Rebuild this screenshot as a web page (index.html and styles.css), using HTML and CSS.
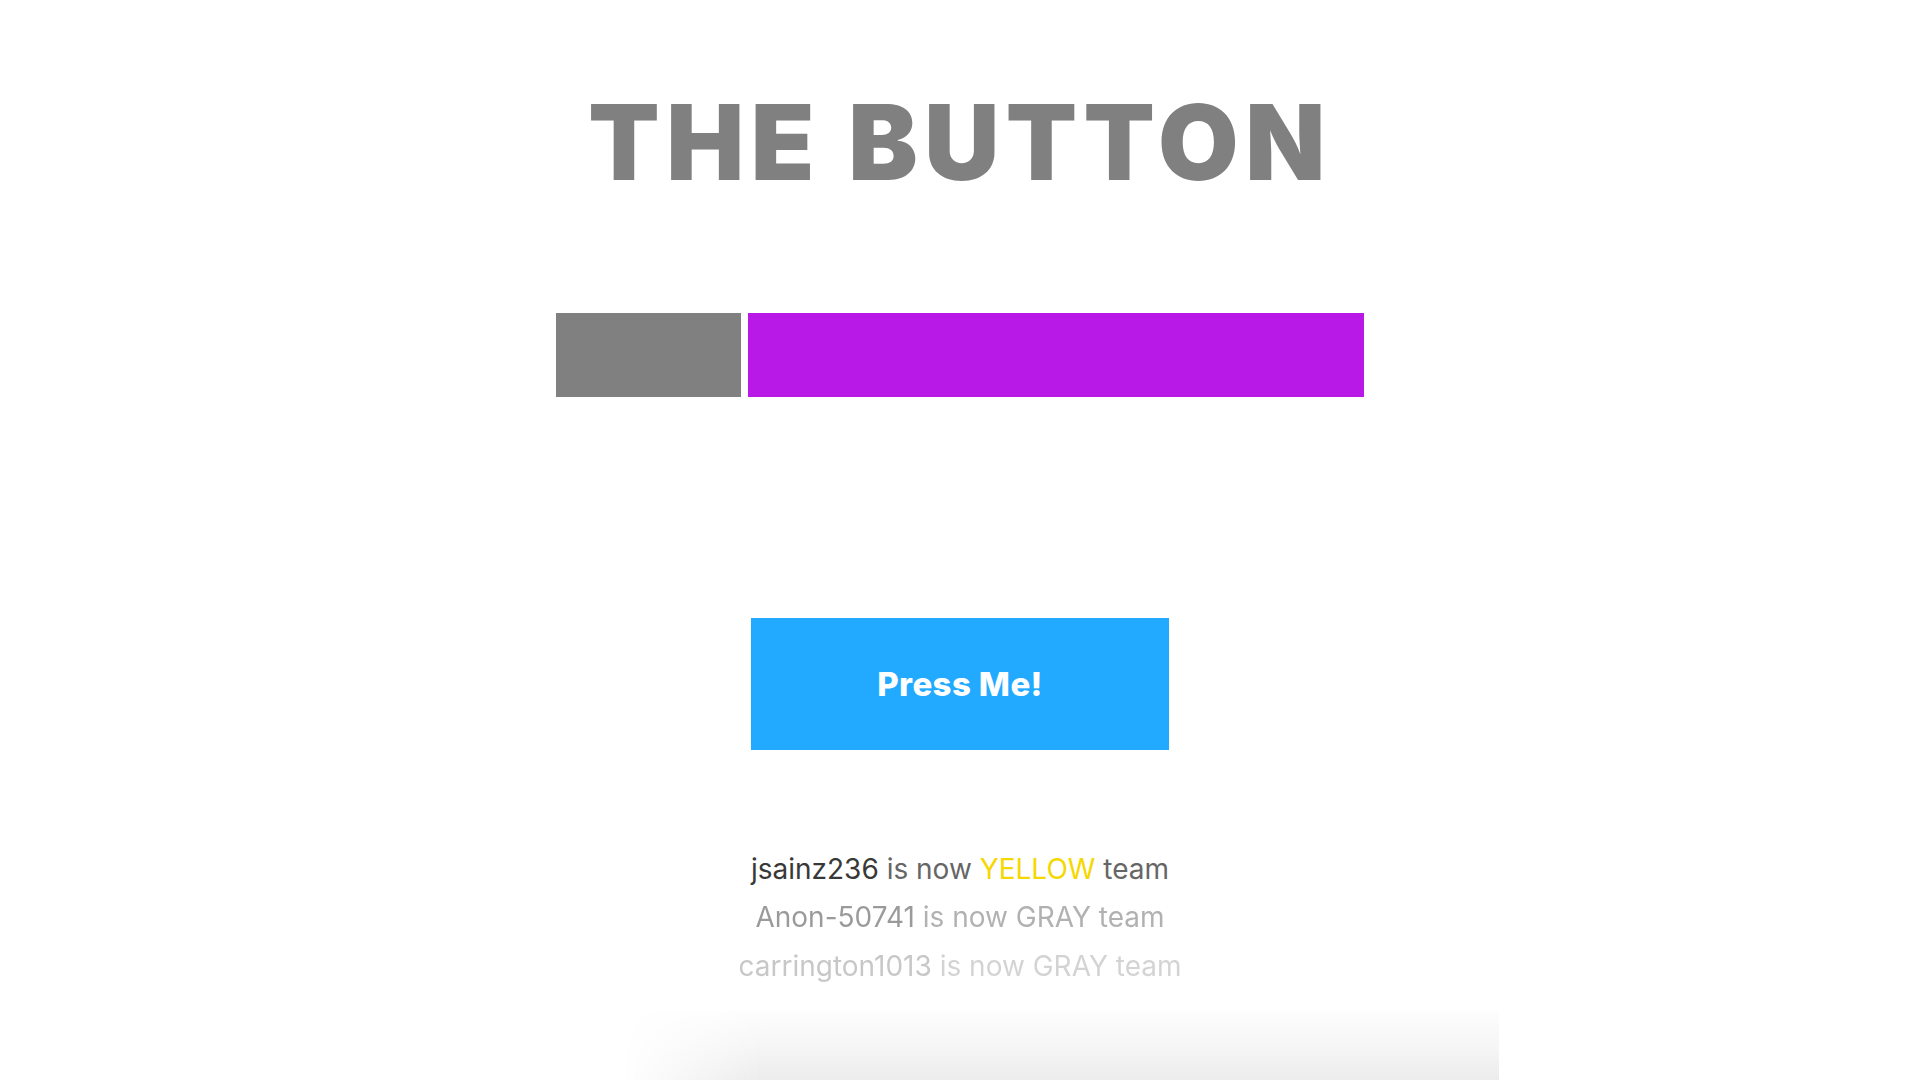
FILE: index.html
```html
<!DOCTYPE html>
<html lang="en">
<head>
<meta charset="utf-8">
<title>The Button</title>
<link rel="stylesheet" href="styles.css">
</head>
<body>
<main class="page">
  <h1 class="title">THE BUTTON</h1>
  <div class="score">
    <div class="score-seg seg-gray" style="width:185px"></div>
    <div class="score-seg seg-purple" style="width:616px"></div>
  </div>
  <button class="press">Press Me!</button>
  <ul class="log">
    <li class="log-line"><span class="user">jsainz236</span> is now <span class="team-yellow">YELLOW</span> team</li>
    <li class="log-line fade-1"><span class="user">Anon-50741</span> is now GRAY team</li>
    <li class="log-line fade-2"><span class="user">carrington1013</span> is now GRAY team</li>
  </ul>
  <div class="panel"></div>
</main>
</body>
</html>
```
FILE: styles.css
```css
html, body {
  margin: 0;
  padding: 0;
  background: #ffffff;
  overflow: hidden;
}
body {
  font-family: "Inter", "Liberation Sans", sans-serif;
}
.page {
  display: flex;
  flex-direction: column;
  align-items: center;
  height: 1080px;
}
.title {
  margin: 90px 0 0;
  padding-left: 0;
  font-size: 104px;
  line-height: 104px;
  font-weight: 900;
  color: #808080;
  letter-spacing: 6.5px;
}
.score {
  margin-top: 119px;
  display: flex;
  gap: 7px;
  width: 808px;
  height: 84px;
}
.score-seg {
  height: 100%;
}
.seg-gray { background: #808080; }
.seg-purple { background: #b919e6; }
.press {
  margin-top: 221px;
  width: 418px;
  height: 132px;
  border: none;
  background: #21aaff;
  color: #ffffff;
  font-family: "Inter", "Liberation Sans", sans-serif;
  font-weight: 800;
  font-size: 33px;
  padding: 0;
  letter-spacing: 0.4px;
}
.log {
  list-style: none;
  margin: 95px 0 0;
  padding: 0;
  text-align: center;
  font-size: 28px;
  line-height: 48.5px;
  color: #666666;
  letter-spacing: 0;
}
.user { color: #383838; }
.team-yellow { color: #f5d800; }
.fade-1 { opacity: 0.5; }
.fade-2 { opacity: 0.28; }
.panel {
  position: relative;
  margin-top: 21px;
  width: 1077px;
  height: 69px;
  background: linear-gradient(to bottom, #fdfdfd 0%, #f6f6f6 50%, #ececec 100%);
  -webkit-mask-image: linear-gradient(to right, transparent 200px, #000 340px);
  mask-image: linear-gradient(to right, transparent 200px, #000 340px);
}
```
